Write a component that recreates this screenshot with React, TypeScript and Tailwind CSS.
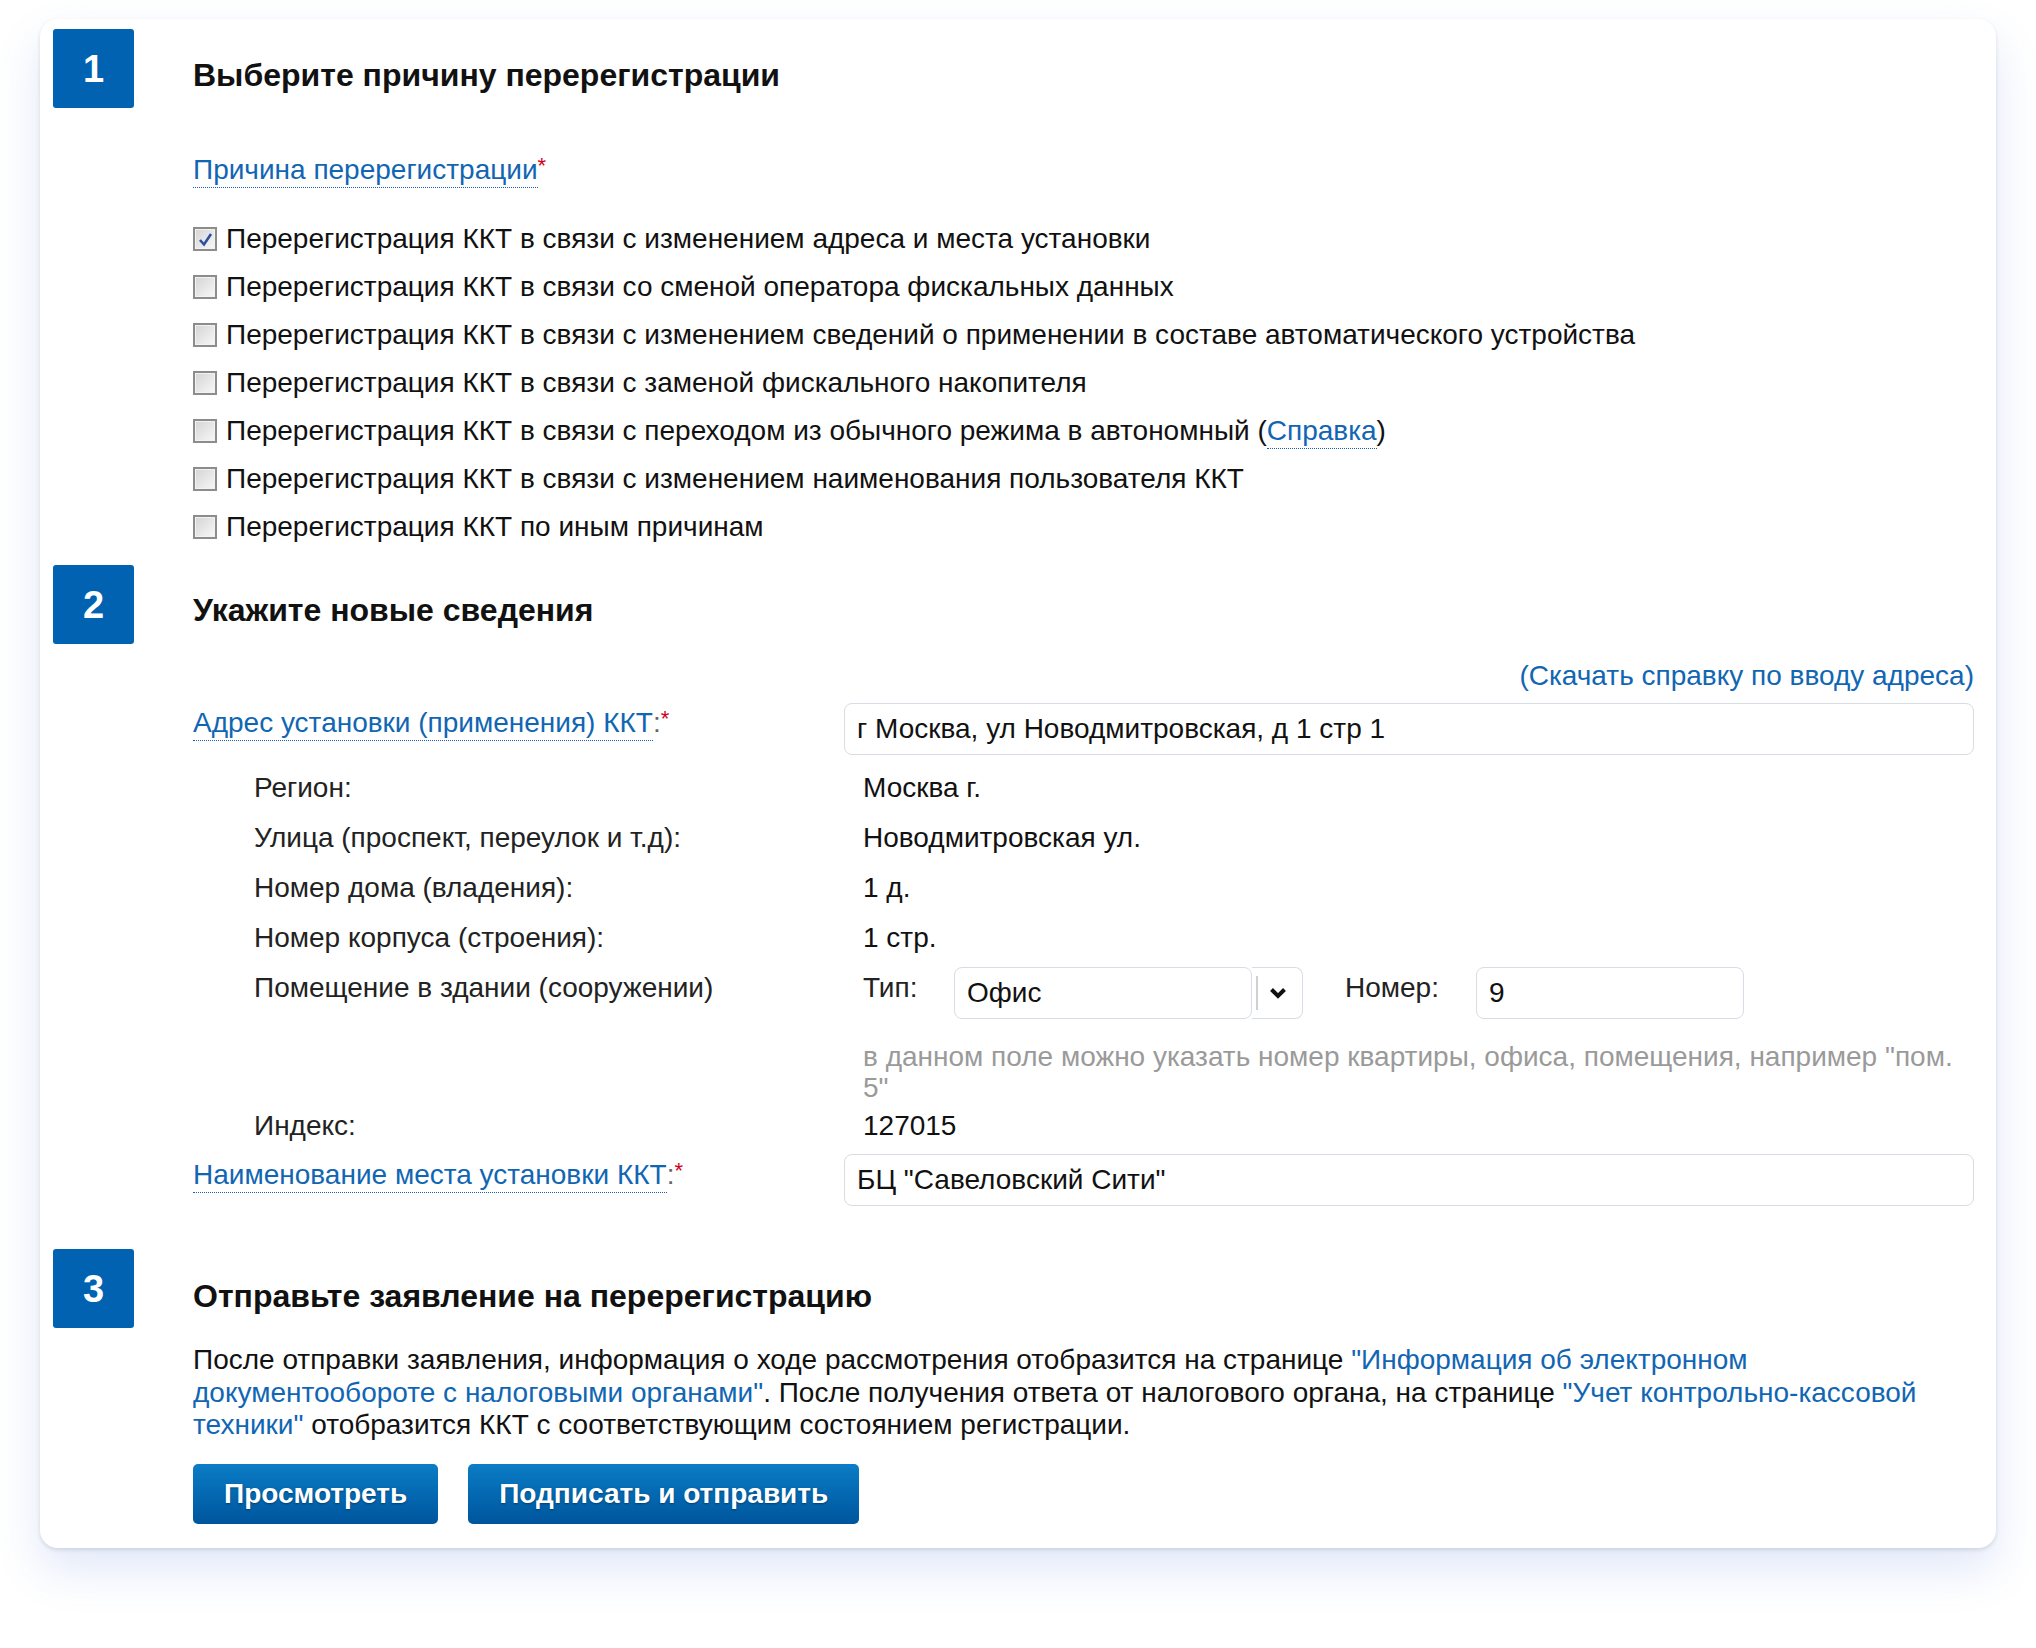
const reasons = [
  { text: "Перерегистрация ККТ в связи с изменением адреса и места установки", checked: true },
  { text: "Перерегистрация ККТ в связи со сменой оператора фискальных данных" },
  { text: "Перерегистрация ККТ в связи с изменением сведений о применении в составе автоматического устройства" },
  { text: "Перерегистрация ККТ в связи с заменой фискального накопителя" },
  { text: "Перерегистрация ККТ в связи с переходом из обычного режима в автономный", help: true },
  { text: "Перерегистрация ККТ в связи с изменением наименования пользователя ККТ" },
  { text: "Перерегистрация ККТ по иным причинам" },
];

const address = [
  { label: "Регион:", value: "Москва г." },
  { label: "Улица (проспект, переулок и т.д):", value: "Новодмитровская ул." },
  { label: "Номер дома (владения):", value: "1 д." },
  { label: "Номер корпуса (строения):", value: "1 стр." },
];

function Badge({ n }: { n: number }) {
  return (
    <div className="flex h-[79px] w-[81px] shrink-0 items-center justify-center rounded-[3px] bg-[#0062b1] text-[38px] font-bold text-white">
      {n}
    </div>
  );
}

function Box({ checked }: { checked?: boolean }) {
  return (
    <span className="mr-[9px] flex h-[24px] w-[24px] shrink-0 items-center justify-center border-2 border-[#8c8c8c] bg-gradient-to-br from-[#d4d4d4] to-[#f8f8f8] shadow-[inset_0_0_0_1px_#f2f2f2]">
      {checked && (
        <svg width="15" height="15" viewBox="0 0 15 15">
          <path d="M2 8 L6 12.5 L13 2" fill="none" stroke="#2d4f9f" strokeWidth="2.6" />
        </svg>
      )}
    </span>
  );
}

function Star() {
  return <span className="relative top-[-4px] align-top text-[22px] text-[#d0021b]">*</span>;
}

const link = "border-b border-dotted border-[#1a5fb0] pb-[2px] text-[#1166b3]";

function FieldLabel({ children }: { children: string }) {
  return (
    <span>
      <span className={link}>{children}</span>
      <span className="text-[#666]">:</span>
      <Star />
    </span>
  );
}

const input = "h-[52px] rounded-[8px] border border-[#d7dde4] bg-white px-[12px] flex items-center";
const btn =
  "h-[60px] rounded-[5px] bg-gradient-to-b from-[#0b7dc6] to-[#00559d] px-[31px] text-[28px] font-bold text-white [text-shadow:0_1px_2px_rgba(0,0,0,0.35)]";

export default function App() {
  return (
    <div className="min-h-[1648px] bg-white pl-[40px] pt-[19px] text-[28px] leading-[32px] text-[#111] [font-family:'Liberation_Sans',Arial,sans-serif]">
      <div className="w-[1956px] rounded-[18px] bg-white pb-[24px] pl-[13px] pr-[22px] pt-[10px] shadow-[0_22px_45px_rgba(70,110,220,0.16),0_2px_4px_rgba(0,0,0,0.12)]">
        {/* 1 */}
        <section className="flex">
          <Badge n={1} />
          <div className="ml-[59px] flex-1">
            <h2 className="pt-[30px] text-[32px] font-bold leading-[32px]">Выберите причину перерегистрации</h2>
            <div className="mt-[63px]">
              <span className={link}>Причина перерегистрации</span>
              <Star />
            </div>
            <div className="mt-[29px]">
              {reasons.map((r) => (
                <div key={r.text} className="flex h-[48px] items-center">
                  <Box checked={r.checked} />
                  <span>
                    {r.text}
                    {r.help && (
                      <>
                        {" ("}
                        <span className={link}>Справка</span>
                        {")"}
                      </>
                    )}
                  </span>
                </div>
              ))}
            </div>
          </div>
        </section>

        {/* 2 */}
        <section className="mt-[14px] flex">
          <Badge n={2} />
          <div className="ml-[59px] flex-1">
            <h2 className="pt-[29px] text-[32px] font-bold leading-[32px]">Укажите новые сведения</h2>
            <div className="mt-[34px] text-right text-[#1166b3]">(Скачать справку по вводу адреса)</div>

            <div className="mt-[11px] grid grid-cols-[651px_1fr]">
              <div className="pt-[4px]">
                <FieldLabel>Адрес установки (применения) ККТ</FieldLabel>
              </div>
              <div className={input}>г Москва, ул Новодмитровская, д 1 стр 1</div>
            </div>

            <div className="mt-[8px]">
              {address.map((a) => (
                <div key={a.label} className="grid h-[50px] grid-cols-[651px_1fr] pt-[9px]">
                  <div className="pl-[61px] text-[#222]">{a.label}</div>
                  <div className="pl-[19px]">{a.value}</div>
                </div>
              ))}
              <div className="grid grid-cols-[651px_1fr]">
                <div className="pl-[61px] pt-[9px] text-[#222]">Помещение в здании (сооружении)</div>
                <div className="flex items-start pl-[19px]">
                  <span className="w-[91px] pt-[9px] text-[#222]">Тип:</span>
                  <div className="mt-[4px] flex">
                    <div className={`${input} w-[298px]`}>Офис</div>
                    <div className="flex h-[52px] w-[51px] items-center rounded-r-[8px] border border-l-0 border-[#d7dde4] pl-[4px]">
                      <span className="mr-[10px] h-[34px] w-[2px] bg-[#d0d0d0]" />
                      <svg width="20" height="14" viewBox="0 0 20 14">
                        <path d="M3.5 3.5 L10 10 L16.5 3.5" fill="none" stroke="#111" strokeWidth="4" />
                      </svg>
                    </div>
                  </div>
                  <span className="ml-[42px] w-[131px] pt-[9px] text-[#222]">Номер:</span>
                  <div className={`${input} mt-[4px] w-[268px]`}>9</div>
                </div>
              </div>
              <div className="grid grid-cols-[651px_1fr]">
                <div />
                <div className="mt-[22px] pl-[19px] leading-[31px] text-[#9a9a9a]">
                  в данном поле можно указать номер квартиры, офиса, помещения, например "пом. 5"
                </div>
              </div>
              <div className="grid h-[48px] grid-cols-[651px_1fr] pt-[7px]">
                <div className="pl-[61px] text-[#222]">Индекс:</div>
                <div className="pl-[19px]">127015</div>
              </div>
            </div>

            <div className="mt-[3px] grid grid-cols-[651px_1fr]">
              <div className="pt-[5px]">
                <FieldLabel>Наименование места установки ККТ</FieldLabel>
              </div>
              <div className={input}>БЦ "Савеловский Сити"</div>
            </div>
          </div>
        </section>

        {/* 3 */}
        <section className="mt-[43px] flex">
          <Badge n={3} />
          <div className="ml-[59px] flex-1">
            <h2 className="pt-[31px] text-[32px] font-bold leading-[32px]">Отправьте заявление на перерегистрацию</h2>
            <p className="mt-[32px] leading-[32.5px]">
              После отправки заявления, информация о ходе рассмотрения отобразится на странице{" "}
              <span className="text-[#1166b3]">"Информация об электронном документообороте с налоговыми органами"</span>. После
              получения ответа от налогового органа, на странице{" "}
              <span className="text-[#1166b3]">"Учет контрольно-кассовой техники"</span> отобразится ККТ с соответствующим
              состоянием регистрации.
            </p>
            <div className="mt-[22px] flex gap-[30px]">
              <button className={btn}>Просмотреть</button>
              <button className={btn}>Подписать и отправить</button>
            </div>
          </div>
        </section>
      </div>
    </div>
  );
}
